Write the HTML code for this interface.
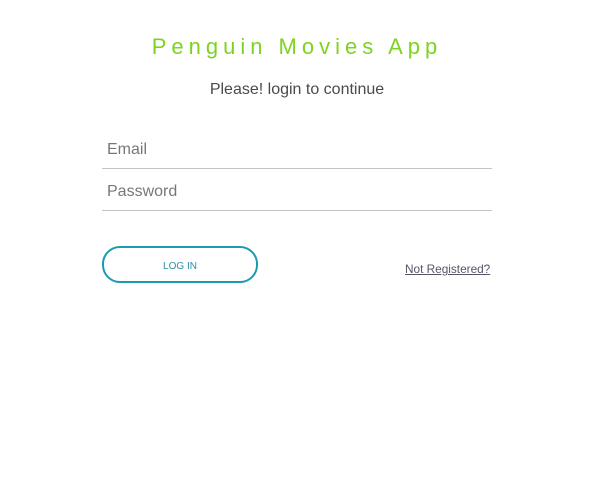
<!DOCTYPE html>
<html><head><style>
body{margin:0;width:594px;height:477px;background:#fff;font-family:"Liberation Sans",sans-serif;position:relative;overflow:hidden}
.t{position:absolute;left:0;width:594px;text-align:center;top:34px;font-size:22px;letter-spacing:5px;color:#7ed321}
.s{position:absolute;left:0;width:594px;text-align:center;top:81px;font-size:16px;color:#4a4a4a}
.f{position:absolute;left:102px;width:390px;border-bottom:1px solid #c4c4c4;height:0}
.l{position:absolute;left:107px;font-size:16px;color:#777}
.b{position:absolute;left:102px;top:246px;width:152px;height:33px;border:2px solid #1a9bb0;border-radius:18px;text-align:center;line-height:37px;font-size:10px;color:#2a8fa8}
.n{position:absolute;left:405px;top:262px;font-size:11.8px;color:#556;text-decoration:underline}
</style></head><body>
<div class="t">Penguin Movies App</div>
<div class="s">Please! login to continue</div>
<div class="l" style="top:141px">Email</div>
<div class="f" style="top:168px"></div>
<div class="l" style="top:183px">Password</div>
<div class="f" style="top:210px"></div>
<div class="b">LOG IN</div>
<div class="n">Not Registered?</div>
</body></html>
